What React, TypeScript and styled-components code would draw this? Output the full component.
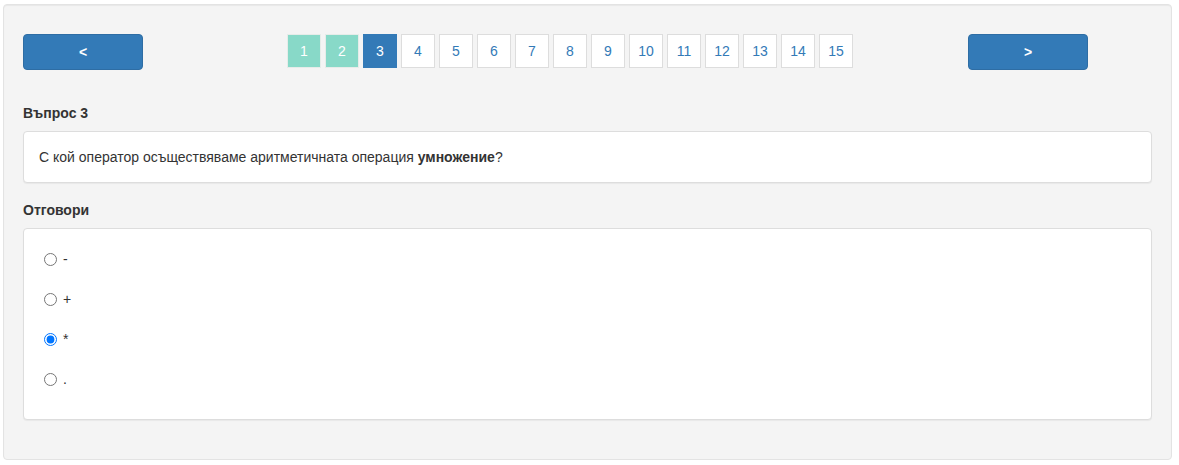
import React from "react";
import styled, { createGlobalStyle } from "styled-components";

const GlobalStyle = createGlobalStyle`
  html, body {
    margin: 0;
    padding: 0;
    background: #ffffff;
  }
  body {
    font-family: "Liberation Sans", Arial, Helvetica, sans-serif;
    font-size: 14px;
    line-height: 20px;
    color: #333333;
  }
  * { box-sizing: border-box; }
`;

const Page = styled.div`
  padding: 4px 7px 0 3px;
`;

const Well = styled.div`
  background: #f4f4f4;
  border: 1px solid #e3e3e3;
  border-radius: 4px;
  box-shadow: inset 0 1px 1px rgba(0, 0, 0, 0.05);
  padding: 19px;
  height: 456px;
`;

const NavRow = styled.div`
  display: flex;
  align-items: flex-start;
  margin-top: 10px;
`;

const NavButton = styled.button<{ $offset?: number }>`
  width: 120px;
  height: 36px;
  background: #337ab7;
  border: 1px solid #2e6da4;
  border-radius: 4px;
  color: #ffffff;
  font-family: "Liberation Sans", Arial, sans-serif;
  font-size: 14px;
  font-weight: bold;
  padding: 0;
  cursor: pointer;
  margin-left: ${(p) => p.$offset ?? 0}px;
`;

const Pagination = styled.ul`
  display: flex;
  gap: 4px;
  list-style: none;
  margin: 0 0 0 144px;
  padding: 0;
`;

type Variant = "answered" | "active" | "normal";

const PageItem = styled.li<{ $variant: Variant }>`
  width: 34px;
  height: 34px;
  display: flex;
  align-items: center;
  justify-content: center;
  font-size: 14px;
  border: 1px solid
    ${(p) =>
      p.$variant === "active" ? "#337ab7" : p.$variant === "answered" ? "#e6ece9" : "#dddddd"};
  background: ${(p) =>
    p.$variant === "active" ? "#337ab7" : p.$variant === "answered" ? "#88d9c8" : "#ffffff"};
  color: ${(p) => (p.$variant === "normal" ? "#337ab7" : "#ffffff")};
  cursor: pointer;
`;

const SectionLabel = styled.div<{ $top: number }>`
  font-weight: bold;
  margin-top: ${(p) => p.$top}px;
  margin-bottom: 8px;
`;

const Panel = styled.div`
  background: #ffffff;
  border: 1px solid #dddddd;
  border-radius: 4px;
  box-shadow: 0 1px 1px rgba(0, 0, 0, 0.05);
`;

const QuestionBody = styled.div`
  padding: 15px;
`;

const AnswersBody = styled.div`
  padding: 20px 15px 30px 15px;
  display: flex;
  flex-direction: column;
  gap: 20px;
`;

const AnswerLabel = styled.label`
  display: flex;
  align-items: center;
  height: 20px;
  cursor: pointer;
`;

const Radio = styled.input`
  width: 13px;
  height: 13px;
  margin: 0 6px 0 5px;
`;

const pages = Array.from({ length: 15 }, (_, i) => i + 1);
const answers = ["-", "+", "*", "."];

export default function App() {
  const [selected, setSelected] = React.useState(2);
  return (
    <>
      <GlobalStyle />
      <Page>
        <Well>
          <NavRow>
            <NavButton>&lt;</NavButton>
            <Pagination>
              {pages.map((n) => (
                <PageItem
                  key={n}
                  $variant={n < 3 ? "answered" : n === 3 ? "active" : "normal"}
                >
                  {n}
                </PageItem>
              ))}
            </Pagination>
            <NavButton $offset={115}>&gt;</NavButton>
          </NavRow>
          <SectionLabel $top={33}>Въпрос 3</SectionLabel>
          <Panel>
            <QuestionBody>
              С кой оператор осъществяваме аритметичната операция <b>умножение</b>?
            </QuestionBody>
          </Panel>
          <SectionLabel $top={17}>Отговори</SectionLabel>
          <Panel>
            <AnswersBody>
              {answers.map((a, i) => (
                <AnswerLabel key={i}>
                  <Radio
                    type="radio"
                    name="answer"
                    checked={selected === i}
                    onChange={() => setSelected(i)}
                  />
                  {a}
                </AnswerLabel>
              ))}
            </AnswersBody>
          </Panel>
        </Well>
      </Page>
    </>
  );
}
